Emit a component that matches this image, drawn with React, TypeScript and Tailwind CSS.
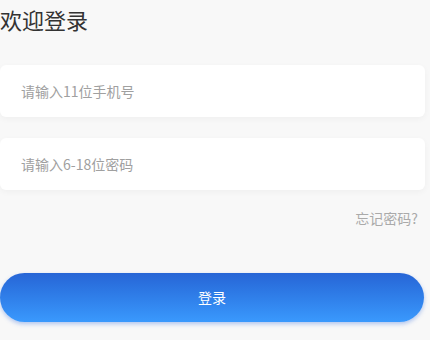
export default function App() {
  return (
    <div
      className="min-h-[340px] w-[430px] bg-[#f8f8f8] pt-[4px] pr-[5px]"
      style={{ fontFamily: '"Noto Sans CJK SC", "Noto Sans", sans-serif' }}
    >
      {/* Title */}
      <h1 className="text-[22px] leading-[30px] font-normal text-[#333333]">欢迎登录</h1>

      {/* Inputs */}
      <div className="mt-[31px] flex flex-col gap-[21px]">
        <div className="flex h-[52px] items-center rounded-md bg-white pl-[21px] shadow-[0_2px_6px_rgba(0,0,0,0.04)]">
          <input
            type="tel"
            placeholder="请输入11位手机号"
            className="w-full bg-transparent text-[14px] text-[#333] outline-none placeholder:text-[#a0a0a0]"
          />
        </div>
        <div className="flex h-[52px] items-center rounded-md bg-white pl-[21px] shadow-[0_2px_6px_rgba(0,0,0,0.04)]">
          <input
            type="password"
            placeholder="请输入6-18位密码"
            className="w-full bg-transparent text-[14px] text-[#333] outline-none placeholder:text-[#a0a0a0]"
          />
        </div>
      </div>

      {/* Forgot password */}
      <div className="mt-[18px] flex justify-end pr-[7px]">
        <span className="text-[14px] leading-[20px] text-[#aaaaaa]">忘记密码?</span>
      </div>

      {/* Login button */}
      <button className="mt-[45px] flex h-[49px] w-[424px] items-center justify-center rounded-full bg-gradient-to-b from-[#2765d6] to-[#3a99fd] text-[14px] text-white shadow-[0_2px_4px_rgba(40,100,220,0.35)]">
        登录
      </button>
    </div>
  )
}
